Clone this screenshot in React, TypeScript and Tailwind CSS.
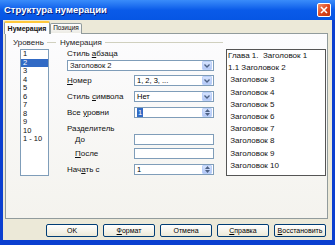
import React from 'react';

const levels = ['1', '2', '3', '4', '5', '6', '7', '8', '9', '10', '1 - 10'];

const preview = [
  'Глава 1.  Заголовок 1',
  '1.1 Заголовок 2',
  ' Заголовок 3',
  ' Заголовок 4',
  ' Заголовок 5',
  ' Заголовок 6',
  ' Заголовок 7',
  ' Заголовок 8',
  ' Заголовок 9',
  ' Заголовок 10',
];

function DropArrow() {
  return (
    <span className="flex h-[9px] w-[10px] items-center justify-center rounded-[1px] border border-[#bcd0f9] bg-gradient-to-b from-[#d6e3fd] to-[#b2c7f6]">
      <svg width="6" height="4" viewBox="0 0 6 4">
        <path d="M0.5 0.5 L3 3 L5.5 0.5" fill="none" stroke="#4d6185" strokeWidth="1.3" />
      </svg>
    </span>
  );
}

function SpinArrows() {
  return (
    <span className="flex h-[9px] w-[10px] flex-col items-center justify-center gap-[1px] rounded-[1px] border border-[#bcd0f9] bg-gradient-to-b from-[#d6e3fd] to-[#b2c7f6]">
      <svg width="5" height="3" viewBox="0 0 5 3">
        <path d="M0 3 L2.5 0 L5 3 Z" fill="#4d6185" />
      </svg>
      <svg width="5" height="3" viewBox="0 0 5 3">
        <path d="M0 0 L2.5 3 L5 0 Z" fill="#4d6185" />
      </svg>
    </span>
  );
}

function Field({ children, arrow }: { children?: React.ReactNode; arrow?: 'drop' | 'spin' }) {
  return (
    <div className="flex h-[11px] w-[80px] items-center justify-between border border-[#7f9db9] bg-white pl-[2px] pr-[1px]">
      <span className="text-[7.5px] leading-none text-black">{children}</span>
      {arrow === 'drop' && <DropArrow />}
      {arrow === 'spin' && <SpinArrows />}
    </div>
  );
}

function Btn({ children }: { children: React.ReactNode }) {
  return (
    <div className="flex h-[13px] w-[52px] items-center justify-center whitespace-nowrap rounded-[2px] border border-[#003c74] bg-gradient-to-b from-white to-[#ece9d8] text-[7px] leading-none text-black">
      {children}
    </div>
  );
}

export default function App() {
  return (
    <div className="flex h-[245px] w-[335px] flex-col bg-[#0b3fd0] font-['Liberation_Sans',Arial,sans-serif] text-[8px] text-[#111]">
      {/* title bar */}
      <div className="flex h-[20px] items-center justify-between bg-gradient-to-b from-[#3a8cfa] via-[#0a5be9] to-[#0656e4] pl-[4px] pr-[4px]">
        <span className="text-[9.5px] font-bold leading-none text-white [text-shadow:1px_1px_0_#0a1e78]">
          Структура нумерации
        </span>
        <span className="flex h-[14px] w-[14px] items-center justify-center rounded-[2px] border border-white bg-gradient-to-br from-[#f0906a] via-[#e0471d] to-[#c0350f]">
          <svg width="8" height="8" viewBox="0 0 8 8">
            <path d="M1 1 L7 7 M7 1 L1 7" stroke="white" strokeWidth="1.6" />
          </svg>
        </span>
      </div>

      {/* body */}
      <div className="mx-[3px] mb-[5px] flex flex-1 flex-col bg-[#ece9d8]">
        {/* tabs */}
        <div className="relative z-10 ml-[1px] mt-[1px] flex h-[13px] items-end">
          <div className="flex h-[13px] w-[46px] items-center justify-center whitespace-nowrap rounded-t-[2px] border-x border-t-2 border-[#919b9c] border-t-[#ffc83c] bg-[#fcfcfe] text-[7px] font-bold leading-none">
            Нумерация
          </div>
          <div className="flex h-[11px] w-[32px] items-center justify-center whitespace-nowrap rounded-t-[2px] border-x border-t border-b border-[#919b9c] border-b-transparent bg-gradient-to-b from-white to-[#ecebe5] text-[6.5px] leading-none">
            Позиция
          </div>
        </div>

        {/* panel */}
        <div className="-mt-[1px] ml-[2px] mr-[4px] flex h-[186px] border border-[#919b9c] bg-gradient-to-b from-[#fcfcfe] to-[#f4f3ee] pl-[7px] pt-[4px]">
          {/* level */}
          <div className="flex w-[47px] flex-col">
            <div className="flex h-[9px] items-center leading-none text-[#1e1e1e]">
              <span>Уровень</span>
              <span className="ml-[3px] mr-[4px] h-px flex-1 bg-[#d0d0bf]" />
            </div>
            <div className="ml-[7px] mt-[2px] h-[127px] w-[29px] border border-[#7f9db9] bg-white">
              {levels.map((l) => (
                <div
                  key={l}
                  className={`h-[8.5px] pl-[2px] text-[7.5px] leading-[8.5px] ${
                    l === '2' ? 'bg-[#316ac5] text-white' : ''
                  }`}
                >
                  {l}
                </div>
              ))}
            </div>
          </div>

          {/* numbering */}
          <div className="flex w-[163px] flex-col">
            <div className="flex h-[9px] items-center leading-none text-[#1e1e1e]">
              <span>Нумерация</span>
              <span className="ml-[3px] h-px flex-1 bg-[#d0d0bf]" />
            </div>
            <div className="flex flex-col pl-[7px]">
              <div className="mt-[2px] flex h-[9px] items-center leading-none">
                Стиль <span className="ml-[2px] underline">а</span>бзаца
              </div>
              <div className="mt-[2px] flex h-[11px] w-[147px] items-center justify-between border border-[#7f9db9] bg-white pl-[2px] pr-[1px]">
                <span className="text-[7.5px] leading-none">Заголовок 2</span>
                <DropArrow />
              </div>
              <div className="mt-[4px] flex h-[11px] w-[147px] items-center justify-between">
                <span className="leading-none">
                  <span className="underline">Н</span>омер
                </span>
                <Field arrow="drop">1, 2, 3, ...</Field>
              </div>
              <div className="mt-[5px] flex h-[11px] w-[147px] items-center justify-between">
                <span className="leading-none">
                  Стиль <span className="underline">с</span>имвола
                </span>
                <Field arrow="drop">Нет</Field>
              </div>
              <div className="mt-[5px] flex h-[11px] w-[147px] items-center justify-between">
                <span className="leading-none">
                  Все <span className="underline">у</span>ровни
                </span>
                <Field arrow="spin">
                  <span className="bg-[#316ac5] px-[1px] text-white">1</span>
                </Field>
              </div>
              <div className="mt-[6px] flex h-[9px] items-center leading-none">Разделитель</div>
              <div className="mt-[1px] flex h-[11px] w-[147px] items-center justify-between">
                <span className="pl-[8px] leading-none">
                  <span className="underline">Д</span>о
                </span>
                <Field />
              </div>
              <div className="mt-[3px] flex h-[11px] w-[147px] items-center justify-between">
                <span className="pl-[8px] leading-none">
                  <span className="underline">П</span>осле
                </span>
                <Field />
              </div>
              <div className="mt-[5px] flex h-[11px] w-[147px] items-center justify-between">
                <span className="leading-none">
                  Нач<span className="underline">а</span>ть с
                </span>
                <Field arrow="spin">1</Field>
              </div>
            </div>
          </div>

          {/* preview */}
          <div className="ml-[3px] mt-[11px] h-[127px] w-[100px] self-start border border-[#555] bg-white pl-[1px]">
            {preview.map((p) => (
              <div key={p} className="h-[12.2px] whitespace-pre text-[8px] leading-[12.2px]">
                {p}
              </div>
            ))}
          </div>
        </div>

        {/* buttons */}
        <div className="mt-[5px] flex justify-end gap-[5px] pr-[6px]">
          <Btn>OK</Btn>
          <Btn>
            <span className="underline">Ф</span>ормат
          </Btn>
          <Btn>Отмена</Btn>
          <Btn>
            <span className="underline">С</span>правка
          </Btn>
          <Btn>
            <span className="underline">В</span>осстановить
          </Btn>
        </div>
      </div>
    </div>
  );
}
